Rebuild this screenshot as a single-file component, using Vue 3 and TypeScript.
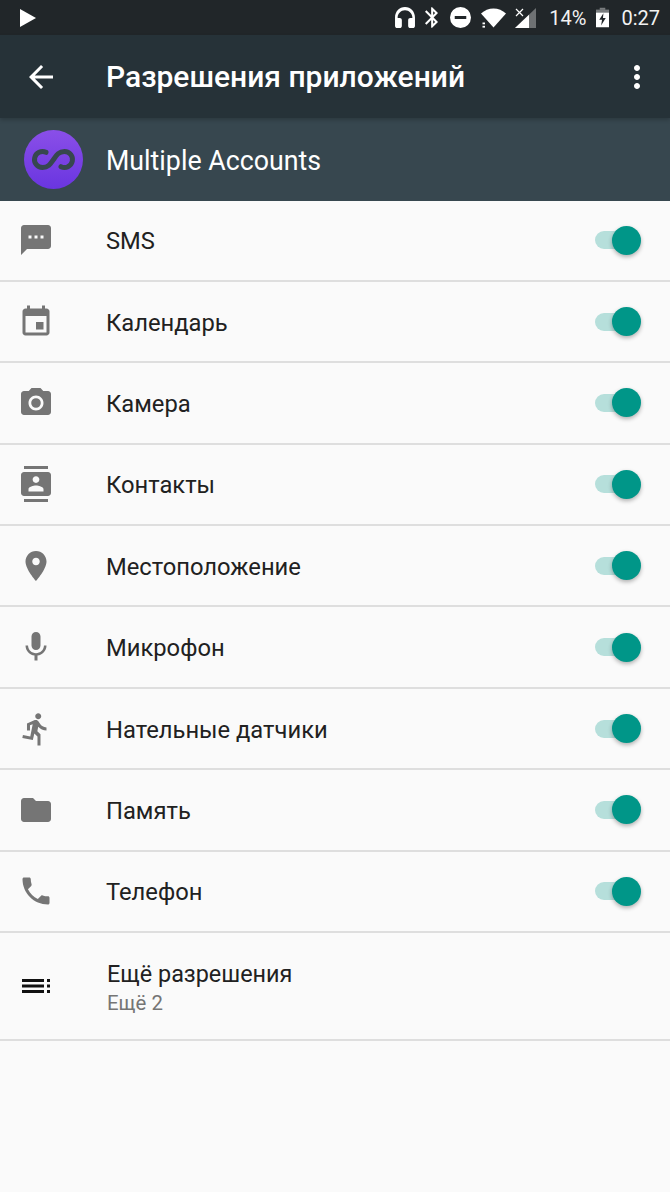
<template>
  <div class="screen">
    <div class="status-bar">
      <svg class="play" viewBox="0 0 16 18" width="16" height="18"><path d="M0 0l16 9-16 9z" /></svg>
      <div class="status-right">
        <svg class="st-headset" viewBox="2.500 2 19 20" width="20" height="21"><path d="M12 2C6.500 2 2.500 6.400 2.500 12v8c0 1.100.9 2 2 2h2.500c1.100 0 2-.9 2-2v-5.500c0-1.100-.9-2-2-2H5V12c0-3.900 3.100-7 7-7s7 3.100 7 7v.5h-2c-1.100 0-2 .9-2 2V20c0 1.100.9 2 2 2h2.500c1.100 0 2-.9 2-2v-8c0-5.600-4-10-9.500-10z" /></svg>
        <svg class="st-bt" viewBox="5 2 12.710 20" width="13" height="21"><path d="M17.710 7.710L12 2h-1v7.590L6.410 5 5 6.410 10.590 12 5 17.590 6.410 19 11 14.410V22h1l5.710-5.710-4.300-4.290 4.300-4.290zM13 5.830l1.880 1.880L13 9.590V5.830zm1.880 10.460L13 18.170v-3.760l1.880 1.880z" /></svg>
        <svg class="st-dnd" viewBox="0 0 20 20" width="21" height="21"><path fill-rule="evenodd" d="M10 0a10 10 0 1 0 0 20 10 10 0 0 0 0-20zM4.500 8.500h11v3h-11z" /></svg>
        <svg class="st-wifi" viewBox="0 0 25 20" width="25" height="20">
          <path d="M0 5.500C3.500 2.400 7.800.5 12.500.5s9 1.900 12.500 5L12.500 19.500z" />
          <rect x="1.500" y="14.500" width="2.500" height="1.800" />
          <rect x="1.500" y="17.800" width="2.500" height="1.800" />
        </svg>
        <svg class="st-signal" viewBox="0 0 21 20" width="21" height="20">
          <path d="M0 20L21 0v20z" opacity="0.35" />
          <path d="M0 20l14-13.300V20z" />
          <path d="M1 1l7 7M8 1L1 8" stroke="#fff" stroke-width="1.200" fill="none" />
        </svg>
        <span class="st-pct">14%</span>
        <svg class="st-batt" viewBox="0 0 14 21" width="13" height="21">
          <path d="M4 0h6v2H4z" opacity="0.4" />
          <path d="M0 2h14v3H0z" opacity="0.4" />
          <path fill-rule="evenodd" d="M0 5h14v16H0zM8 6L3.500 13H6.500L5.500 19 10.500 11H7.500z" />
        </svg>
        <span class="st-time">0:27</span>
      </div>
    </div>

    <header class="toolbar">
      <svg class="back" viewBox="0 0 24 24" width="36" height="36"><path d="M20 11H7.830l5.590-5.590L12 4l-8 8 8 8 1.410-1.410L7.830 13H20v-2z" /></svg>
      <h1>Разрешения приложений</h1>
      <svg class="menu" viewBox="0 0 24 24" width="36" height="36"><path d="M12 8c1.100 0 2-.9 2-2s-.9-2-2-2-2 .9-2 2 .9 2 2 2zm0 2c-1.100 0-2 .9-2 2s.9 2 2 2 2-.9 2-2-.9-2-2-2zm0 6c-1.100 0-2 .9-2 2s.9 2 2 2 2-.9 2-2-.9-2-2-2z" /></svg>
    </header>

    <div class="app-row">
      <svg class="logo" viewBox="0 0 59 59" width="59" height="59">
        <defs>
          <linearGradient id="logoFill" x1="0" y1="0" x2="0" y2="1">
            <stop offset="0" stop-color="#8a4fe8" />
            <stop offset="1" stop-color="#6a35e0" />
          </linearGradient>
        </defs>
        <circle cx="29.500" cy="29.500" r="29.500" fill="url(#logoFill)" />
        <path d="M22 22.300A8 8 0 1 0 18.500 37.500C25 37.500 27 33 29.500 29.500C32 26 34 21.500 40.500 21.500A8 8 0 1 1 37 36.700" fill="none" stroke="#37474f" stroke-width="5" stroke-linecap="round" />
      </svg>
      <span class="app-name">Multiple Accounts</span>
    </div>

    <ul class="perm-list">
      <li v-for="perm in permissions" :key="perm.label" class="perm-row">
        <svg class="perm-icon" viewBox="0 0 24 24" width="36" height="36"><path :d="perm.icon" /></svg>
        <span class="perm-label">{{ perm.label }}</span>
        <span class="switch"><span class="thumb"></span></span>
      </li>
      <li class="perm-row more-row">
        <svg class="perm-icon more-icon" viewBox="0 0 28 16" width="28" height="16">
          <path d="M0 1h22v3H0zM0 6.500h22v3H0zM0 12h22v3H0zM25 1h3v3h-3zM25 6.500h3v3h-3zM25 12h3v3h-3z" />
        </svg>
        <div class="more-text">
          <span class="perm-label">Ещё разрешения</span>
          <span class="more-sub">Ещё 2</span>
        </div>
      </li>
    </ul>
  </div>
</template>

<script setup lang="ts">
interface Permission {
  label: string
  icon: string
}

const permissions: Permission[] = [
  { label: 'SMS', icon: 'M20 2H4c-1.100 0-1.990.9-1.990 2L2 22l4-4h14c1.100 0 2-.9 2-2V4c0-1.100-.9-2-2-2zM9 11H7V9h2v2zm4 0h-2V9h2v2zm4 0h-2V9h2v2z' },
  { label: 'Календарь', icon: 'M17 12h-5v5h5v-5zM16 1v2H8V1H6v2H5c-1.110 0-1.990.9-1.990 2L3 19c0 1.100.89 2 2 2h14c1.100 0 2-.9 2-2V5c0-1.100-.9-2-2-2h-1V1h-2zm3 18H5V8h14v11z' },
  { label: 'Камера', icon: 'M12 8.800a3.200 3.200 0 1 0 0 6.400 3.200 3.200 0 0 0 0-6.400zM9 2L7.170 4H4c-1.100 0-2 .9-2 2v12c0 1.100.9 2 2 2h16c1.100 0 2-.9 2-2V6c0-1.100-.9-2-2-2h-3.170L15 2H9zm3 15c-2.760 0-5-2.240-5-5s2.240-5 5-5 5 2.240 5 5-2.240 5-5 5z' },
  { label: 'Контакты', icon: 'M20 0H4v2h16V0zM4 24h16v-2H4v2zM20 4H4c-1.100 0-2 .9-2 2v12c0 1.100.9 2 2 2h16c1.100 0 2-.9 2-2V6c0-1.100-.9-2-2-2zm-8 2.750c1.240 0 2.250 1.010 2.250 2.250s-1.010 2.250-2.250 2.250S9.750 10.240 9.750 9 10.760 6.750 12 6.750zM17 17H7v-1.500c0-1.670 3.330-2.500 5-2.500s5 .83 5 2.500V17z' },
  { label: 'Местоположение', icon: 'M12 2C8.130 2 5 5.130 5 9c0 5.250 7 13 7 13s7-7.750 7-13c0-3.870-3.130-7-7-7zm0 9.500c-1.380 0-2.500-1.120-2.500-2.500s1.120-2.500 2.500-2.500 2.500 1.120 2.500 2.500-1.120 2.500-2.500 2.500z' },
  { label: 'Микрофон', icon: 'M12 14c1.660 0 2.990-1.340 2.990-3L15 5c0-1.660-1.340-3-3-3S9 3.340 9 5v6c0 1.660 1.340 3 3 3zm5.300-3c0 3-2.540 5.100-5.300 5.100S6.700 14 6.700 11H5c0 3.410 2.720 6.230 6 6.720V21h2v-3.280c3.280-.48 6-3.300 6-6.720h-1.700z' },
  { label: 'Нательные датчики', icon: 'M13.490 5.480c1.100 0 2-.9 2-2s-.9-2-2-2-2 .9-2 2 .9 2 2 2zm-3.600 13.900l1-4.400 2.100 2v6h2v-7.500l-2.100-2 .6-3c1.300 1.500 3.300 2.500 5.500 2.500v-2c-1.900 0-3.500-1-4.300-2.400l-1-1.600c-.4-.6-1-1-1.700-1-.3 0-.5.1-.8.1l-5.200 2.200v4.700h2v-3.400l1.800-.7-1.600 8.100-4.900-1-.4 2 7 1.400z' },
  { label: 'Память', icon: 'M10 4H4c-1.100 0-1.990.9-1.990 2L2 18c0 1.100.9 2 2 2h16c1.100 0 2-.9 2-2V8c0-1.100-.9-2-2-2h-8l-2-2z' },
  { label: 'Телефон', icon: 'M6.620 10.790c1.440 2.830 3.760 5.140 6.590 6.590l2.200-2.200c.27-.27.67-.36 1.020-.24 1.120.37 2.330.57 3.570.57.55 0 1 .45 1 1V20c0 .55-.45 1-1 1-9.390 0-17-7.610-17-17 0-.55.45-1 1-1h3.500c.55 0 1 .45 1 1 0 1.250.2 2.450.57 3.570.11.35.03.74-.25 1.020l-2.200 2.200z' },
]
</script>

<style>
html,
body {
  margin: 0;
  background: #fafafa;
}
</style>

<style scoped>
.screen {
  width: 670px;
  height: 1192px;
  overflow: hidden;
  background: #fafafa;
  font-family: Roboto, "Noto Sans", sans-serif;
}

.status-bar {
  height: 35px;
  background: #212629;
  display: flex;
  align-items: center;
  justify-content: space-between;
  padding: 0 10px 0 20px;
  box-sizing: border-box;
  color: #fff;
}

.status-bar svg {
  fill: #fff;
  display: block;
  flex: none;
}

.status-right {
  display: flex;
  align-items: center;
}

.st-headset {
  margin-right: 10px;
}

.st-bt {
  margin-right: 12px;
}

.st-dnd {
  margin-right: 10px;
}

.st-wifi {
  margin-right: 9px;
}

.st-signal {
  margin-right: 13px;
}

.st-pct {
  font-size: 20px;
  margin-right: 10px;
  color: #f2f2f2;
}

.st-batt {
  margin-right: 12px;
}

.st-time {
  font-size: 20px;
  color: #f2f2f2;
}

.toolbar {
  height: 83px;
  background: #263238;
  display: flex;
  align-items: center;
  padding: 0 15px 0 23px;
  box-sizing: border-box;
  box-shadow: 0 2px 4px rgba(0, 0, 0, 0.2);
  position: relative;
}

.toolbar svg {
  fill: #fff;
  flex: none;
}

.toolbar h1 {
  flex: 1;
  margin: 0 0 0 47px;
  color: #fff;
  font-size: 30px;
  font-weight: 500;
}

.app-row {
  height: 82.500px;
  background: #37474f;
  display: flex;
  align-items: center;
  padding-left: 24px;
  box-sizing: border-box;
}

.logo {
  flex: none;
}

.app-name {
  margin-left: 23px;
  padding-top: 3px;
  color: #fff;
  font-size: 26.750px;
}

.perm-list {
  list-style: none;
  margin: 0;
  padding: 0;
}

.perm-row {
  height: 81.400px;
  box-sizing: border-box;
  border-bottom: 2px solid #dedede;
  display: flex;
  align-items: center;
  padding: 0 32px 0 18px;
}

.perm-icon {
  flex: none;
  fill: #757575;
}

.perm-label {
  flex: 1;
  margin-left: 52px;
  padding-top: 2px;
  font-size: 23.750px;
  color: #212121;
}

.switch {
  position: relative;
  width: 43px;
  height: 18px;
  border-radius: 9px;
  background: #b6dfdb;
}

.thumb {
  position: absolute;
  right: -3px;
  top: -5.500px;
  width: 29px;
  height: 29px;
  border-radius: 50%;
  background: #009688;
  box-shadow: 0 2px 4px rgba(0, 0, 0, 0.3);
}

.more-row {
  height: 108px;
  padding-left: 22px;
}

.more-icon {
  fill: #111;
}

.more-text {
  display: flex;
  flex-direction: column;
  margin-left: 57px;
}

.more-text .perm-label {
  margin-left: 0;
  font-size: 23.400px;
}

.more-sub {
  font-size: 20.400px;
  color: #757575;
  margin-top: 3px;
}
</style>
